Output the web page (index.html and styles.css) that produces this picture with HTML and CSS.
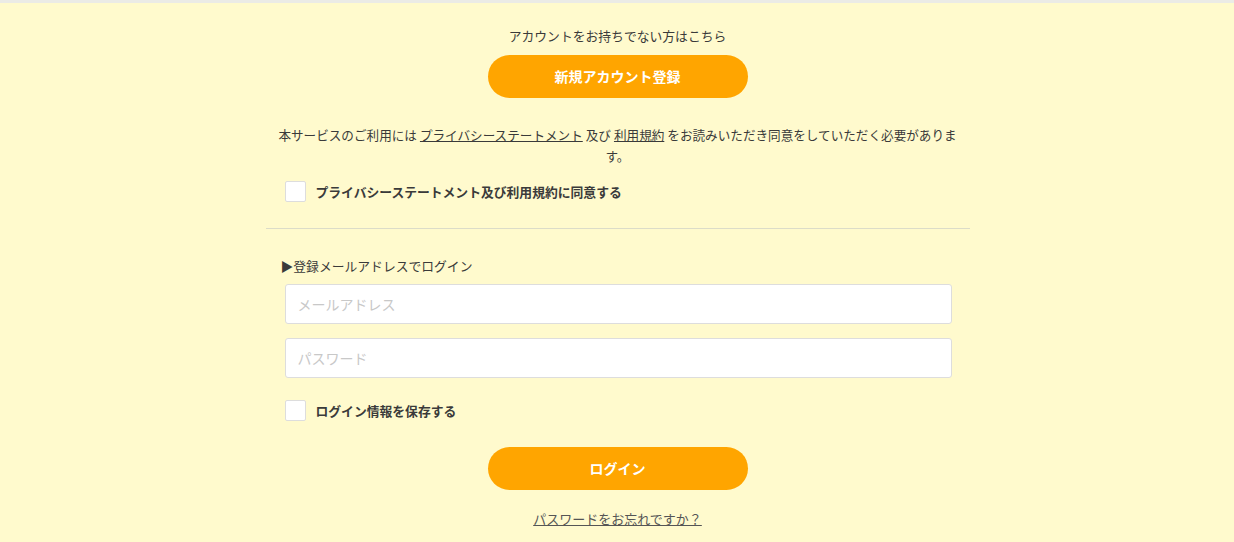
FILE: index.html
```html
<!DOCTYPE html>
<html lang="ja">
<head>
<meta charset="utf-8">
<title>ログイン</title>
<link rel="stylesheet" href="styles.css">
</head>
<body>
<div class="topbar"></div>
<main class="page">
  <div class="container">
    <p class="lead">アカウントをお持ちでない方はこちら</p>
    <div class="btn-row"><a class="btn" href="#">新規アカウント登録</a></div>
    <p class="notice"><span>本サービスのご利用には</span><a href="#">プライバシーステートメント</a><span>及び</span><a href="#">利用規約</a><span>をお読みいただき同意をしていただく必要がありま</span><span>す。</span></p>
    <label class="check check-agree"><span class="box"></span><span class="check-label">プライバシーステートメント及び利用規約に同意する</span></label>
    <hr class="divider">
    <p class="section-title">▶登録メールアドレスでログイン</p>
    <div class="fields">
      <input class="field" type="text" placeholder="メールアドレス">
      <input class="field" type="password" placeholder="パスワード">
      <label class="check check-save"><span class="box"></span><span class="check-label">ログイン情報を保存する</span></label>
    </div>
    <div class="btn-row login-row"><a class="btn" href="#">ログイン</a></div>
    <p class="forgot"><a href="#">パスワードをお忘れですか？</a></p>
  </div>
</main>
</body>
</html>
```
FILE: styles.css
```css
html, body {
  margin: 0;
  padding: 0;
}
body {
  background: #fffacd;
  font-family: "Noto Sans CJK JP", "Noto Sans", sans-serif;
  font-size: 13px;
  line-height: 21px;
  color: #3a3a3a;
}
.topbar {
  height: 3px;
  background: #ebebe6;
}
.page {
  background: #fffacd;
  min-height: 539px;
}
.container {
  width: 704px;
  margin: 0 auto;
  padding-top: 22px;
  padding-left: 1px;
}
p { margin: 0; }
.lead {
  text-align: center;
  font-size: 12.8px;
}
.btn-row {
  display: flex;
  justify-content: center;
  margin-top: 9px;
}
.btn {
  display: flex;
  align-items: center;
  justify-content: center;
  width: 260px;
  height: 43px;
  border-radius: 22px;
  background: #ffa500;
  color: #fff;
  font-weight: bold;
  font-size: 14px;
  text-decoration: none;
}
.notice {
  margin-top: 26px;
  padding: 0 10px;
  text-align: center;
  font-size: 12.6px;
}
.notice a {
  color: #3a3a3a;
  text-decoration: underline;
  margin: 0 3px;
}
.check {
  display: flex;
  align-items: center;
  gap: 10px;
  margin-left: 19px;
}
.check-agree { margin-top: 15px; }
.box {
  width: 19px;
  height: 19px;
  background: #fff;
  border: 1px solid #ddd;
  border-radius: 2px;
  flex: none;
}
.check-label {
  font-weight: bold;
  font-size: 12.8px;
}
.divider {
  border: 0;
  border-top: 1px solid #dcdcc8;
  margin: 26px 0 0 0;
}
.section-title {
  margin-top: 26px;
  margin-left: 15px;
  font-size: 12.8px;
}
.fields {
  display: flex;
  flex-direction: column;
  margin: 8px 18px 0 19px;
  gap: 14px;
}
.fields .check { margin-left: 0; margin-top: 8px; }
.field {
  box-sizing: border-box;
  height: 40px;
  width: 100%;
  margin: 0;
  border: 1px solid #ddd;
  border-radius: 3px;
  background: #fff;
  padding: 0 12px;
  font-family: "Noto Sans CJK JP", "Noto Sans", sans-serif;
  font-size: 14px;
  color: #333;
}
.field::placeholder { color: #c8c8c8; }
.login-row { margin-top: 26px; }
.forgot {
  margin-top: 18px;
  text-align: center;
}
.forgot a {
  color: #555;
  text-decoration: underline;
}
```
